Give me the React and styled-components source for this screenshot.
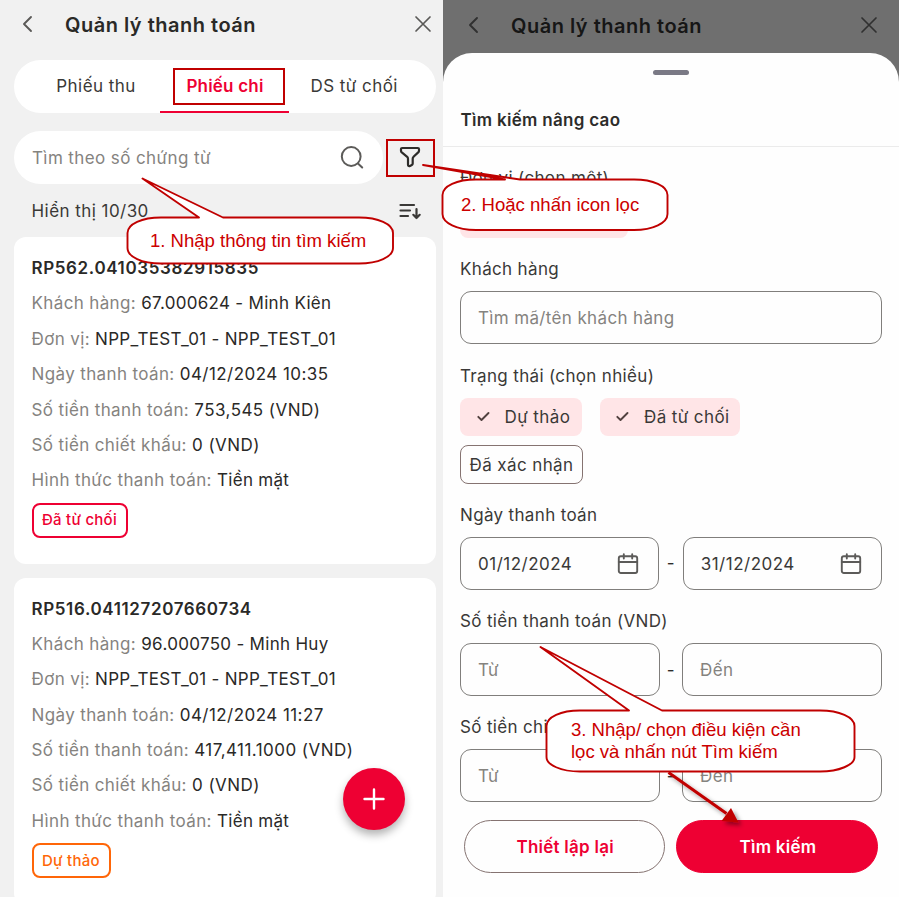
import React from 'react';
import styled, { createGlobalStyle } from 'styled-components';

const Global = createGlobalStyle`
  * { box-sizing: border-box; }
  body { margin: 0; background: #f1f1f1; }
`;

const Stage = styled.div`
  position: relative;
  display: grid;
  grid-template-columns: 442.5px 1fr;
  width: 899px;
  height: 897px;
  overflow: hidden;
  font-family: Inter, 'Noto Sans', sans-serif;
  font-size: 17px;
  line-height: 22px;
  letter-spacing: 0.5px;
  color: #2d2c2a;
  white-space: nowrap;
`;

const Screen = styled.section`
  position: relative;
  display: flex;
  flex-direction: column;
  min-width: 0;
  height: 897px;
  overflow: hidden;
  background: ${(p) => (p.$dimmed ? '#6f6f6f' : '#f1f1f1')};
`;

const Header = styled.header`
  display: flex;
  align-items: center;
  height: ${(p) => (p.$dimmed ? 53 : 50)}px;
  flex: none;
  padding: ${(p) => (p.$dimmed ? '0 20px 3px 24px' : '0 10px 2px 20.5px')};
  color: ${(p) => (p.$dimmed ? '#303030' : '#5a5957')};
`;

const Title = styled.h1`
  flex: 1;
  margin: 2px 0 0 31.5px;
  font-size: 20px;
  line-height: 26px;
  font-weight: 600;
  letter-spacing: 0.5px;
  color: ${(p) => (p.$dimmed ? '#161616' : '#2a2927')};
`;

const Icon = styled.svg`
  display: block;
  flex: none;
  fill: none;
  stroke: currentColor;
  stroke-linecap: round;
  stroke-linejoin: round;
`;

const Tabs = styled.nav`
  display: grid;
  grid-template-columns: 146px 129px 1fr;
  flex: none;
  height: 53px;
  margin: 10px 7px 0 14px;
  border-radius: 27px;
  background: #fff;
`;

const Tab = styled.div`
  display: flex;
  align-items: center;
  justify-content: center;
  padding: 1px ${(p) => p.$right || 0}px 0 ${(p) => p.$left || 0}px;
  color: ${(p) => (p.$active ? '#ee0033' : '#3a3937')};
  font-weight: ${(p) => (p.$active ? 600 : 400)};
  letter-spacing: ${(p) => (p.$active ? 0.2 : 0.45)}px;
  border-bottom: 2px solid ${(p) => (p.$active ? '#ee0033' : 'transparent')};
`;

const SearchRow = styled.div`
  display: flex;
  align-items: center;
  flex: none;
  margin: 18px 0 0 14px;
  color: #2d2c2a;
`;

const SearchBox = styled.div`
  display: flex;
  align-items: center;
  justify-content: space-between;
  width: 369px;
  height: 53px;
  padding: 0 19px 0 18px;
  border-radius: 27px;
  background: #fff;
  color: #85837f;
  letter-spacing: 0.4px;
`;

const FilterButton = styled.div`
  display: grid;
  place-items: center;
  width: 49px;
  height: 38px;
  margin: 1px 0 0 3px;
  padding: 0 2px 2px 0;
  border: 2px solid #c00000;
`;

const CountRow = styled.div`
  display: flex;
  align-items: center;
  justify-content: space-between;
  flex: none;
  height: 53px;
  padding: 0 20px 0 31.5px;
  color: #3a3937;
  letter-spacing: 0.45px;
`;

const Card = styled.article`
  flex: none;
  height: 327px;
  margin: 0 7px 13.5px 14px;
  padding: 14px 18px 0 17.5px;
  border-radius: 12px;
  background: #fff;
`;

const Row = styled.div`
  height: 35.4px;
  line-height: 35.6px;
  color: ${(p) => (p.$heading ? '#2a2927' : '#85837f')};
  font-weight: ${(p) => (p.$heading ? 600 : 400)};
  letter-spacing: ${(p) => (p.$heading ? 0.62 : 0.37)}px;
`;

const Value = styled.span`
  color: #2a2927;
  letter-spacing: ${(p) => (p.$numeric ? 0.45 : 0.3)}px;
`;

const Badge = styled.span`
  display: inline-flex;
  align-items: center;
  height: 35px;
  margin-top: 4px;
  padding: 0 9px 0 8.5px;
  border: 2px solid ${(p) => p.$color};
  border-radius: 8px;
  color: ${(p) => p.$color};
  font-size: 15px;
  font-weight: 500;
  letter-spacing: 0.25px;
`;

const AddButton = styled.div`
  position: absolute;
  left: 343px;
  top: 767.5px;
  display: grid;
  place-items: center;
  width: 62px;
  height: 62px;
  border-radius: 50%;
  background: #ee0033;
  color: #fff;
  box-shadow: 0 5px 8px rgba(0, 0, 0, 0.3);
`;

const Sheet = styled.div`
  display: flex;
  flex-direction: column;
  flex: 1;
  border-radius: 29px 29px 0 0;
  background: #fefefe;
`;

const Handle = styled.div`
  width: 36px;
  height: 5px;
  margin: 17px auto 0;
  border-radius: 3px;
  background: #7a7985;
`;

const SheetTitle = styled.h2`
  margin: 0;
  padding: 34px 18px 15px;
  border-bottom: 1px solid #ebebeb;
  font-size: 17px;
  line-height: 22px;
  font-weight: 600;
  letter-spacing: 0.3px;
`;

const Form = styled.div`
  display: flex;
  flex-direction: column;
  padding: 0 17px 0 17.5px;
`;

const Label = styled.div`
  height: 22px;
  margin: ${(p) => p.$top ?? 20.2}px 0 11px;
  color: #3a3937;
  letter-spacing: 0.34px;
`;

const Field = styled.div`
  display: flex;
  align-items: center;
  justify-content: space-between;
  height: 53px;
  padding: 1px 19.5px 0 17px;
  border: 1px solid #807e7c;
  border-radius: 11px;
  background: #fefefe;
  color: ${(p) => (p.$filled ? '#3a3937' : '#85837f')};
  letter-spacing: ${(p) => (p.$filled ? 0.5 : 0.36)}px;
`;

const Range = styled.div`
  display: grid;
  grid-template-columns: ${(p) => p.$side || 200}px 1fr ${(p) => p.$side || 200}px;
  align-items: center;
  text-align: center;
`;

const Chips = styled.div`
  display: flex;
  flex-wrap: wrap;
  gap: 9px 18px;
  max-width: 320px;
`;

const Chip = styled.div`
  display: flex;
  align-items: center;
  gap: 14px;
  width: ${(p) => p.$width}px;
  height: 38.3px;
  padding: 0 8px 0 ${(p) => (p.$selected ? 15.5 : 8.5)}px;
  border: ${(p) => (p.$selected ? 'none' : '1px solid #857371')};
  border-radius: 8px;
  background: ${(p) => (p.$selected ? '#ffe5e7' : '#fefefe')};
  color: #3a3937;
  letter-spacing: 0.4px;
`;

const Actions = styled.div`
  display: flex;
  gap: 11px;
  margin: 18px 21px 0;
`;

const Action = styled.div`
  display: grid;
  place-items: center;
  width: 202px;
  height: 53px;
  padding-left: 1.5px;
  border: 1px solid ${(p) => (p.$primary ? '#ee0033' : '#857371')};
  border-radius: 27px;
  background: ${(p) => (p.$primary ? '#ee0033' : '#fefefe')};
  color: ${(p) => (p.$primary ? '#fff' : '#ee0033')};
  font-weight: 600;
  letter-spacing: 0.25px;
`;

const Marker = styled.div`
  position: absolute;
  left: 173px;
  top: 68px;
  width: 112px;
  height: 37px;
  border: 2px solid #c00000;
`;

const Shapes = styled.svg`
  position: absolute;
  inset: 0;
  pointer-events: none;
`;

const Note = styled.div`
  position: absolute;
  left: ${(p) => p.$x}px;
  top: ${(p) => p.$y}px;
  color: #cc0000;
  font-family: 'Liberation Sans', Arial, sans-serif;
  font-size: 18.6px;
  line-height: 22px;
  letter-spacing: -0.03px;
`;

const Back = () => (
  <Icon width="13" height="18" viewBox="0 0 13 18" strokeWidth="1.9">
    <path d="M10 2 3 9l7 7" />
  </Icon>
);
const Close = () => (
  <Icon width="20" height="20" viewBox="0 0 20 20" strokeWidth="1.7">
    <path d="m3 3 14 14M17 3 3 17" />
  </Icon>
);
const Search = () => (
  <Icon width="24" height="24" viewBox="0 0 24 24" strokeWidth="2" color="#5c5b59">
    <circle cx="11.2" cy="10.5" r="9.4" />
    <path d="m18.2 17.700 4 3.800" />
  </Icon>
);
const Filter = () => (
  <Icon width="22" height="22" viewBox="0 0 22 22" strokeWidth="2.2">
    <path d="M2 3.2q0-1.200 1.200-1.200h15.600Q20 2 20 3.200v1.500q0 1-.8 1.700l-4.700 4.400q-.8.7-.8 1.900v4.800q0 1-.9 1.500l-1.800 1q-2 .7-2-1.500v-5.800q0-1.100-.8-1.900L2.800 6.400Q2 5.700 2 4.700Z" />
  </Icon>
);
const Sort = () => (
  <Icon width="24" height="20" viewBox="0 0 24 20" strokeWidth="2.200">
    <path d="M1.500 4h13.500M1.500 9.500h9.500M1.500 15h7.500M17.500 8v9M14.300 13.800l3.200 3.200 3.200-3.200" />
  </Icon>
);
const Calendar = () => (
  <Icon width="22" height="22" viewBox="0 0 22 22" strokeWidth="1.9" color="#5c5b59">
    <rect x="1.800" y="3.200" width="18.400" height="16.800" rx="2" />
    <path d="M1.800 9h18.400M6.800 1.200v4.300M15.200 1.200v4.300" />
  </Icon>
);
const Check = () => (
  <Icon width="15" height="12" viewBox="0 0 15 12" strokeWidth="1.9" color="#51413f">
    <path d="m2.300 5.800 3.200 3.200L12.500 2" />
  </Icon>
);
const Plus = () => (
  <Icon width="24" height="24" viewBox="0 0 24 24" strokeWidth="2.400">
    <path d="M12 2.500v19M2.500 12h19" />
  </Icon>
);

const payments = [
  {
    code: 'RP562.041035382915835',
    rows: [
      ['Khách hàng', '67.000624 - Minh Kiên'],
      ['Đơn vị', 'NPP_TEST_01 - NPP_TEST_01'],
      ['Ngày thanh toán', '04/12/2024 10:35'],
      ['Số tiền thanh toán', '753,545 (VND)'],
      ['Số tiền chiết khấu', '0 (VND)'],
      ['Hình thức thanh toán', 'Tiền mặt'],
    ],
    status: 'Đã từ chối',
    color: '#ee0033',
  },
  {
    code: 'RP516.041127207660734',
    rows: [
      ['Khách hàng', '96.000750 - Minh Huy'],
      ['Đơn vị', 'NPP_TEST_01 - NPP_TEST_01'],
      ['Ngày thanh toán', '04/12/2024 11:27'],
      ['Số tiền thanh toán', '417,411.1000 (VND)'],
      ['Số tiền chiết khấu', '0 (VND)'],
      ['Hình thức thanh toán', 'Tiền mặt'],
    ],
    status: 'Dự thảo',
    color: '#ff6608',
  },
];

const isNumeric = (value) => /^[\d/.,: ]+(\(VND\))?$/.test(value);

const TopBar = ({ dimmed }) => (
  <Header $dimmed={dimmed}>
    <Back />
    <Title $dimmed={dimmed}>Quản lý thanh toán</Title>
    <Close />
  </Header>
);

const AmountRange = () => (
  <Range>
    <Field>Từ</Field>
    <span>-</span>
    <Field>Đến</Field>
  </Range>
);

export default function App() {
  return (
    <Stage>
      <Global />
      <Screen>
        <TopBar />
        <Tabs>
          <Tab $left={18}>Phiếu thu</Tab>
          <Tab $active $left={1}>Phiếu chi</Tab>
          <Tab $right={16}>DS từ chối</Tab>
        </Tabs>
        <SearchRow>
          <SearchBox>
            Tìm theo số chứng từ
            <Search />
          </SearchBox>
          <FilterButton>
            <Filter />
          </FilterButton>
        </SearchRow>
        <CountRow>
          Hiển thị 10/30
          <Sort />
        </CountRow>
        {payments.map((p) => (
          <Card key={p.code}>
            <Row $heading>{p.code}</Row>
            {p.rows.map(([k, v]) => (
              <Row key={k}>
                {k}: <Value $numeric={isNumeric(v)}>{v}</Value>
              </Row>
            ))}
            <Badge $color={p.color}>{p.status}</Badge>
          </Card>
        ))}
        <AddButton>
          <Plus />
        </AddButton>
      </Screen>

      <Screen $dimmed>
        <TopBar dimmed />
        <Sheet>
          <Handle />
          <SheetTitle>Tìm kiếm nâng cao</SheetTitle>
          <Form>
            <Label $top={20}>Đơn vị (chọn một)</Label>
            <Chips>
              <Chip $selected $width={168} />
            </Chips>
            <Label>Khách hàng</Label>
            <Field>Tìm mã/tên khách hàng</Field>
            <Label $top={20.6}>Trạng thái (chọn nhiều)</Label>
            <Chips>
              <Chip $selected $width={121.5}>
                <Check />
                Dự thảo
              </Chip>
              <Chip $selected $width={140.5}>
                <Check />
                Đã từ chối
              </Chip>
              <Chip $width={123}>Đã xác nhận</Chip>
            </Chips>
            <Label>Ngày thanh toán</Label>
            <Range $side={199.3}>
              <Field $filled>
                01/12/2024
                <Calendar />
              </Field>
              <span>-</span>
              <Field $filled>
                31/12/2024
                <Calendar />
              </Field>
            </Range>
            <Label>Số tiền thanh toán (VND)</Label>
            <AmountRange />
            <Label>Số tiền chi</Label>
            <AmountRange />
          </Form>
          <Actions>
            <Action>Thiết lập lại</Action>
            <Action $primary>Tìm kiếm</Action>
          </Actions>
        </Sheet>
      </Screen>

      <Marker />
      <Shapes width="899" height="897" viewBox="0 0 899 897">
        <defs>
          <filter id="arrowShadow" x="-20%" y="-20%" width="150%" height="150%">
            <feDropShadow dx="3" dy="3" stdDeviation="2" floodOpacity="0.4" />
          </filter>
        </defs>
        <g fill="#fff" stroke="#c00000" strokeWidth="1.900" strokeLinejoin="round">
          <path d="M161 217.500H199L142.500 178.500 223 217.500H359C378 217.500 393 224 393 233V248C393 257 378 263.500 359 263.500H161C142 263.500 127.500 257 127.500 248V233C127.500 224 142 217.500 161 217.500Z" />
          <path d="M476 179.500H505L423 165 520 179.500H634C653 179.500 667.500 186 667.500 195V214C667.500 223 653 230 634 230H476C457 230 442.500 223 442.500 214V195C442.500 186 457 179.500 476 179.500Z" />
          <path d="M580 710.500H629L540.500 647 662 710.500H820C839 710.500 854.500 717 854.500 726V757C854.500 765 839 771.500 820 771.500H580C561 771.500 546.500 765 546.500 757V726C546.500 717 561 710.500 580 710.500Z" />
        </g>
        <g filter="url(#arrowShadow)" fill="#c00000">
          <path d="m668.500 772.500 58 41" stroke="#c00000" strokeWidth="3" />
          <path d="m738.500 822.500-17-1.500 9.500-13Z" />
        </g>
      </Shapes>
      <Note $x={150} $y={230}>1. Nhập thông tin tìm kiếm</Note>
      <Note $x={461} $y={194}>2. Hoặc nhấn icon lọc</Note>
      <Note $x={571} $y={718.5}>
        3. Nhập/ chọn điều kiện cần
        <br />
        lọc và nhấn nút Tìm kiếm
      </Note>
    </Stage>
  );
}
